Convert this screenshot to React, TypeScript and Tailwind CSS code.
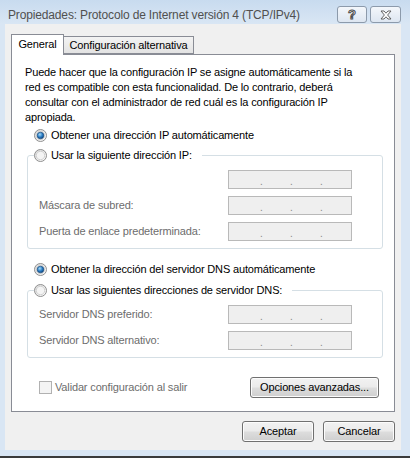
import React from "react";

function Radio({ checked }: { checked?: boolean }) {
  return (
    <svg width="13" height="13" viewBox="0 0 13 13" className="shrink-0">
      <defs>
        <linearGradient id="rbg" x1="0" y1="0" x2="1" y2="1">
          <stop offset="0" stopColor="#d8d8d8" />
          <stop offset="1" stopColor="#ffffff" />
        </linearGradient>
        <radialGradient id="rdot" cx="0.4" cy="0.35" r="0.7">
          <stop offset="0" stopColor="#a9dcf7" />
          <stop offset="0.55" stopColor="#2a7cc4" />
          <stop offset="1" stopColor="#0c3f74" />
        </radialGradient>
      </defs>
      <circle cx="6.5" cy="6.5" r="6" fill="url(#rbg)" stroke="#8f8f8f" />
      <circle cx="6.5" cy="6.5" r="4.2" fill="#f4f4f4" stroke="#c9c9c9" strokeWidth="0.8" />
      {checked && <circle cx="6.5" cy="6.5" r="3.3" fill="url(#rdot)" stroke="#1d4f80" strokeWidth="0.7" />}
    </svg>
  );
}

function IpBox() {
  return (
    <div className="ml-auto mr-[30px] flex h-[19px] w-[124px] items-end border border-[#b9b9b9] bg-[#efefef] pb-[1px] pl-[31px] text-[10px] leading-[10px] text-[#888]">
      <span className="w-[30px]">.</span>
      <span className="w-[30px]">.</span>
      <span className="w-[30px]">.</span>
    </div>
  );
}

function Row({ label }: { label?: string }) {
  return (
    <div className="flex h-[19px] items-center">
      {label && <span className="pl-[5px] text-[#6d6d6d]">{label}</span>}
      <IpBox />
    </div>
  );
}

function Group({ legend, labels }: { legend: string; labels: (string | undefined)[] }) {
  return (
    <fieldset className="ml-[2px] w-[356px] rounded-[3px] border border-[#d5dfe5] pb-[7px] pl-[6px]">
      <legend className="flex h-[16px] items-center gap-[4px] pr-[10px]">
        <Radio />
        <span>{legend}</span>
      </legend>
      <div className="flex flex-col gap-[7px] pt-[7px]">
        {labels.map((l, i) => (
          <Row key={i} label={l} />
        ))}
      </div>
    </fieldset>
  );
}

function Button({ children, w }: { children: React.ReactNode; w: string }) {
  return (
    <button
      className={`${w} h-[21px] rounded-[3px] border border-[#707070] bg-[linear-gradient(#f2f2f2_0%,#ebebeb_48%,#dddddd_52%,#cfcfcf_100%)] text-[11px] leading-none text-black shadow-[inset_0_0_0_1px_#fcfcfc]`}
    >
      {children}
    </button>
  );
}

export default function App() {
  return (
    <div className="flex h-[458px] w-[410px] flex-col overflow-hidden bg-[#d9e6f4] font-['Liberation_Sans',Arial,sans-serif] text-[11px] tracking-[-0.15px] text-black">
      {/* title bar */}
      <div className="flex h-[24px] items-start bg-[linear-gradient(#c8dbef,#d9e6f4)]">
        <span className="whitespace-nowrap pl-[8px] pt-[8px] text-[12px] leading-[15px] text-[#505050]">
          Propiedades: Protocolo de Internet versión 4 (TCP/IPv4)
        </span>
        <div className="ml-auto mr-[9px] mt-[6px] flex gap-[3px]">
          <div className="flex h-[17px] w-[30px] items-center justify-center rounded-[3px] border border-[#8c9aab] bg-[linear-gradient(#f4f7fb,#dde6f1)] text-[13px] font-bold leading-none text-white [-webkit-text-stroke:1px_#4d4d4d]">
            ?
          </div>
          <div className="flex h-[17px] w-[31px] items-center justify-center rounded-[3px] border border-[#8c9aab] bg-[linear-gradient(#f4f7fb,#dde6f1)]">
            <svg width="12" height="10" viewBox="0 0 12 10">
              <path
                d="M1 1h3l2 2.2L8 1h3L7.6 5 11 9H8L6 6.8 4 9H1l3.4-4z"
                fill="#fff"
                stroke="#555"
                strokeWidth="0.9"
                strokeLinejoin="round"
              />
            </svg>
          </div>
        </div>
      </div>

      {/* client area */}
      <div className="ml-[5px] mr-[9px] flex h-[426px] flex-col bg-[#f0f0f0] px-[6px] pt-[10px]">
        {/* tabs */}
        <div className="flex h-[20px] items-start">
          <div className="relative z-10 flex h-[21px] w-[53px] items-center justify-center border border-b-0 border-[#898c95] bg-white pb-[1px]">
            General
          </div>
          <div className="mt-[2px] flex h-[18px] w-[130px] items-center justify-center whitespace-nowrap border border-l-0 border-[#898c95] bg-[linear-gradient(#f3f3f3,#e3e3e3)]">
            Configuración alternativa
          </div>
        </div>

        {/* panel */}
        <div className="flex h-[358px] flex-col border border-[#898c95] bg-white pl-[13px] pt-[10px]">
          <p className="w-[338px] leading-[15px]">
            Puede hacer que la configuración IP se asigne automáticamente si la red es compatible con esta
            funcionalidad. De lo contrario, deberá consultar con el administrador de red cuál es la
            configuración IP apropiada.
          </p>

          <div className="mt-[2px] flex h-[16px] items-center gap-[4px] pl-[9px]">
            <Radio checked />
            <span>Obtener una dirección IP automáticamente</span>
          </div>

          <div className="mt-[4px]">
            <Group
              legend="Usar la siguiente dirección IP:"
              labels={[undefined, "Máscara de subred:", "Puerta de enlace predeterminada:"]}
            />
          </div>

          <div className="mt-[12px] flex h-[16px] items-center gap-[4px] pl-[9px]">
            <Radio checked />
            <span>Obtener la dirección del servidor DNS automáticamente</span>
          </div>

          <div className="mt-[5px]">
            <Group
              legend="Usar las siguientes direcciones de servidor DNS:"
              labels={["Servidor DNS preferido:", "Servidor DNS alternativo:"]}
            />
          </div>

          <div className="mt-[19px] flex h-[21px] items-center pr-[15px]">
            <div className="ml-[14px] h-[13px] w-[13px] border border-[#b1b1b1] bg-[#f4f4f4]" />
            <span className="ml-[3px] text-[#6d6d6d]">Validar configuración al salir</span>
            <div className="ml-auto">
              <Button w="w-[129px]">Opciones avanzadas...</Button>
            </div>
          </div>
        </div>

        {/* dialog buttons */}
        <div className="mt-[9px] flex justify-end gap-[9px]">
          <Button w="w-[72px]">Aceptar</Button>
          <Button w="w-[72px]">Cancelar</Button>
        </div>
      </div>

      <div className="h-[6px]" />
      <div className="h-[2px] bg-[#3b3b3b]" />
    </div>
  );
}
